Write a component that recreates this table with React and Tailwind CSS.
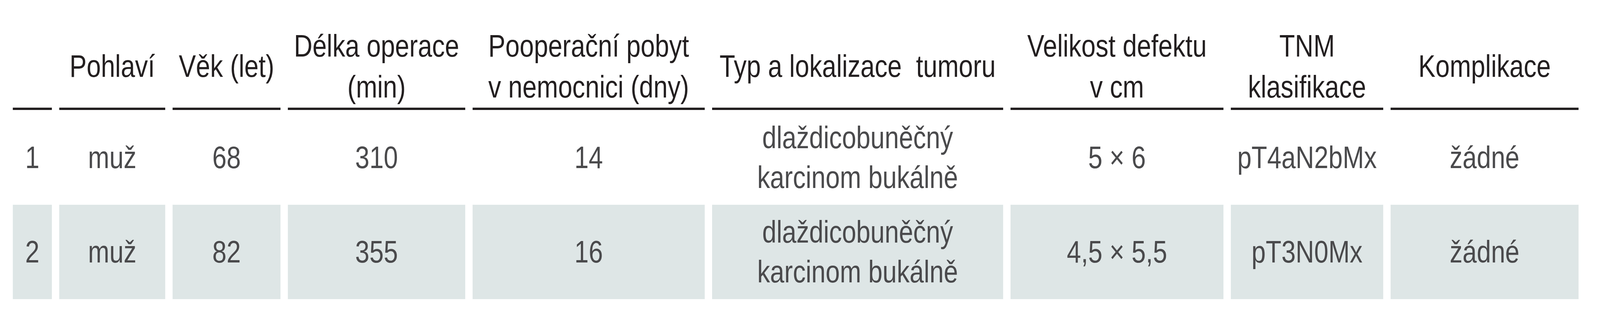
import React, { useEffect, useState } from "react";

const headers = [
  ["", null],
  ["Pohlaví", null],
  ["Věk (let)", null],
  ["Délka operace", "(min)"],
  ["Pooperační pobyt", "v nemocnici (dny)"],
  ["Typ a lokalizace\u00a0 tumoru", null],
  ["Velikost defektu", "v cm"],
  ["TNM", "klasifikace"],
  ["Komplikace", null],
];

const rows = [
  ["1", "muž", "68", "310", "14", ["dlaždicobuněčný", "karcinom bukálně"], "5 × 6", "pT4aN2bMx", "žádné"],
  ["2", "muž", "82", "355", "16", ["dlaždicobuněčný", "karcinom bukálně"], "4,5 × 5,5", "pT3N0Mx", "žádné"],
];

const DESIGN_W = 4997;

function useFitScale() {
  const get = () =>
    typeof window === "undefined" ? 1 : Math.min(1, window.innerWidth / DESIGN_W);
  const [s, setS] = useState(get);
  useEffect(() => {
    const on = () => setS(get());
    window.addEventListener("resize", on);
    return () => window.removeEventListener("resize", on);
  }, []);
  return s;
}

export default function App() {
  const sx = useFitScale();
  return (
    <div className="w-full h-[800px] overflow-hidden bg-white">
      <div
        className="w-[4997px] h-[800px] bg-white pt-[63px] pl-[40px] origin-top-left"
        style={{
          fontFamily: '"Liberation Sans", Arial, sans-serif',
          transform: `scaleX(${sx})`,
        }}
      >
        <div className="grid grid-cols-[122px_331px_337px_554px_725px_909px_665px_476px_587px] gap-x-[23px]">
          {headers.map(([a, b], i) => (
            <div
              key={"h" + i}
              className="h-[219px] border-b-[6px] border-[#231f20] flex flex-col items-center justify-center text-center text-[80px] leading-[105px] text-[#231f20] whitespace-nowrap"
            >
              <span>{a}</span>
              {b && <span>{b}</span>}
            </div>
          ))}
          {rows.map((row, r) =>
            row.map((cell, c) => (
              <div
                key={"r" + r + "c" + c}
                className={
                  (r === 1 ? "bg-[#dee6e6] h-[242px] " : "h-[243px] ") +
                  "flex flex-col items-center justify-center text-center text-[80px] leading-[102px] text-[#4a4a4c] whitespace-nowrap"
                }
              >
                {Array.isArray(cell) ? (
                  cell.map((l, k) => <span key={k}>{l}</span>)
                ) : (
                  <span>{cell}</span>
                )}
              </div>
            ))
          )}
        </div>
      </div>
    </div>
  );
}
